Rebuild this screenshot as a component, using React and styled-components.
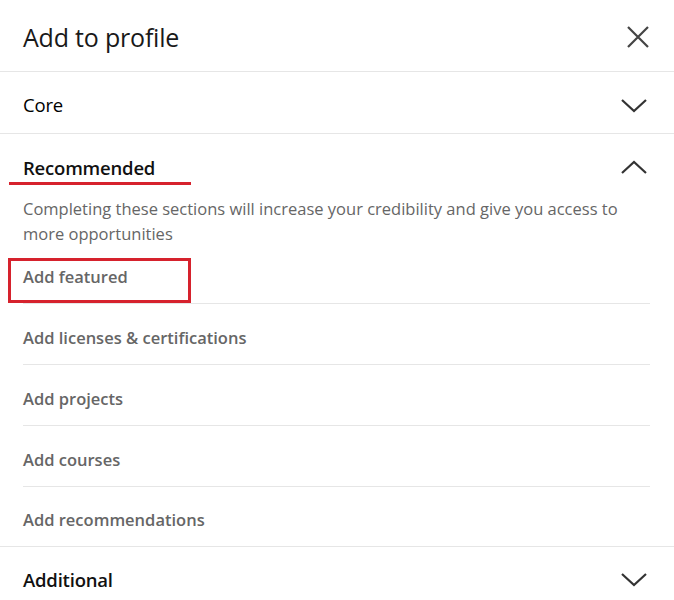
import React from 'react';
import styled, { createGlobalStyle } from 'styled-components';

const GlobalStyle = createGlobalStyle`
  body {
    margin: 0;
    background: #fff;
    font-family: "Open Sans", "Noto Sans", sans-serif;
  }
`;

const items = [
  'Add featured',
  'Add licenses & certifications',
  'Add projects',
  'Add courses',
  'Add recommendations',
];

export default function App() {
  return (
    <>
      <GlobalStyle />
      <Panel>
        <Header>
          <Title>Add to profile</Title>
          <IconButton aria-label="Close">
            <svg width="24" height="24" viewBox="0 0 24 24">
              <path d="M2 2 L22 22 M22 2 L2 22" stroke="#444" strokeWidth="2.2" fill="none" />
            </svg>
          </IconButton>
        </Header>

        <Section>
          <SectionHead $h="61px">
            <SectionTitle>Core</SectionTitle>
            <Chevron />
          </SectionHead>
        </Section>

        <Section>
          <SectionHead $h="62px">
            <SectionTitle $strong>
              Recommended
              <Underline />
            </SectionTitle>
            <Chevron up />
          </SectionHead>
          <Description>
            Completing these sections will increase your credibility and give you access to more opportunities
          </Description>
          <List>
            {items.map((label, i) => (
              <Item key={label}>
                {label}
                {i === 0 && <Highlight />}
              </Item>
            ))}
          </List>
        </Section>

        <Section>
          <SectionHead>
            <SectionTitle $strong>Additional</SectionTitle>
            <Chevron />
          </SectionHead>
        </Section>
      </Panel>
    </>
  );
}

function Chevron({ up }) {
  return (
    <ChevronWrap>
      <svg width="28" height="16" viewBox="0 0 28 16">
        <path
          d={up ? 'M2 14 L14 3 L26 14' : 'M2 3 L14 14 L26 3'}
          stroke="#333"
          strokeWidth="2.2"
          fill="none"
        />
      </svg>
    </ChevronWrap>
  );
}

const Panel = styled.div`
  width: 674px;
  height: 600px;
  overflow: hidden;
  background: #fff;
`;

const Header = styled.div`
  display: flex;
  align-items: center;
  justify-content: space-between;
  height: 72px;
  padding: 2px 24px 0 23px;
  border-bottom: 1px solid #e6e6e6;
  box-sizing: border-box;
`;

const Title = styled.h1`
  margin: 0;
  font-size: 25px;
  font-weight: 400;
  color: #191919;
  letter-spacing: -0.2px;
`;

const IconButton = styled.button`
  display: flex;
  align-items: center;
  justify-content: center;
  padding: 0;
  border: 0;
  background: none;
`;

const Section = styled.div`
  border-bottom: 1px solid #e6e6e6;
`;

const SectionHead = styled.div`
  display: flex;
  align-items: center;
  justify-content: space-between;
  height: ${p => p.$h || '60px'};
  padding: 4px 26px 0 23px;
  box-sizing: border-box;
`;

const SectionTitle = styled.span`
  position: relative;
  font-size: 18.5px;
  font-weight: ${p => (p.$strong ? 600 : 400)};
  color: ${p => (p.$strong ? '#111' : '#000')};
  letter-spacing: -0.2px;
`;

const Underline = styled.span`
  position: absolute;
  left: -14px;
  top: 27px;
  width: 182px;
  height: 3px;
  background: #d6222d;
`;

const ChevronWrap = styled.span`
  display: flex;
`;

const Description = styled.p`
  margin: 0;
  padding: 0 50px 0 23px;
  font-size: 16.5px;
  line-height: 25px;
  color: #666;
`;

const List = styled.ul`
  list-style: none;
  margin: 0;
  padding: 0 24px 0 23px;
`;

const Item = styled.li`
  position: relative;
  display: flex;
  align-items: center;
  height: 61px;
  padding-top: 7px;
  font-size: 16.5px;
  font-weight: 600;
  color: #666;
  border-bottom: 1px solid #e6e6e6;
  box-sizing: border-box;

  &:first-child {
    height: 58px;
    padding-top: 4px;
  }

  &:last-child {
    height: 59px;
    padding-top: 5px;
    border-bottom: 0;
  }
`;

const Highlight = styled.span`
  position: absolute;
  left: -15px;
  top: 12px;
  width: 183px;
  height: 45px;
  border: 3px solid #d6222d;
  box-sizing: border-box;
`;
